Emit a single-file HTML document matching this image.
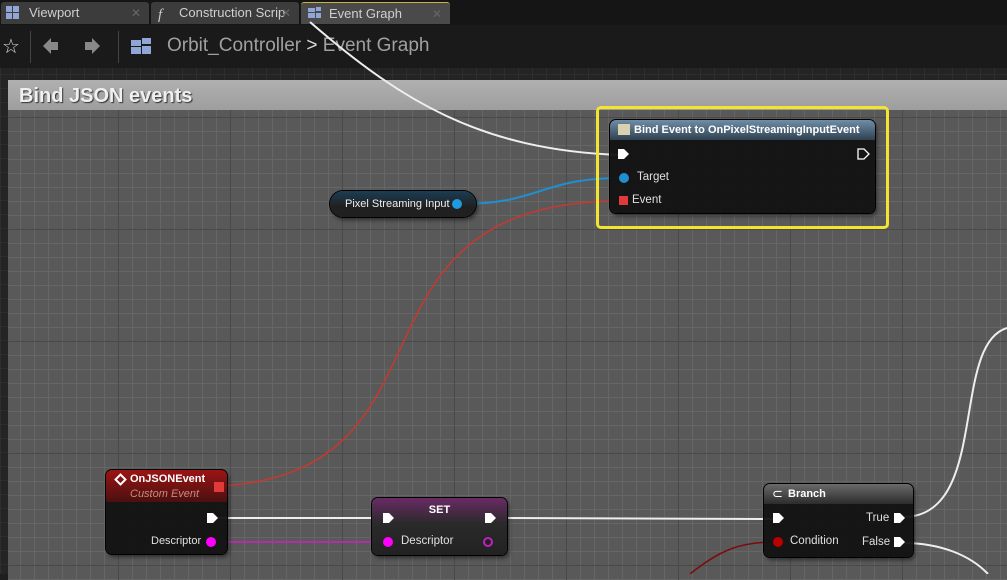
<!DOCTYPE html>
<html><head><meta charset="utf-8"><style>
*{margin:0;padding:0;box-sizing:border-box}
body{width:1007px;height:574px;overflow:hidden;background:#1e1e1e;font-family:"Liberation Sans",sans-serif;position:relative}
.tabs{position:absolute;left:0;top:0;width:1007px;height:25px;background:#151515}
.tab{position:absolute;top:2px;height:22px;background:#3c3c3c;color:#d0d0d0;font-size:13px;line-height:22px;padding-left:28px;border-radius:3px 3px 0 0}
.tab .x{position:absolute;right:8px;top:0;color:#666;font-size:12px}
.tool{position:absolute;left:0;top:25px;width:1007px;height:43px;background:#1a1a1a}
.graph{position:absolute;left:0;top:68px;width:1007px;height:506px;background:#242424;
background-image:linear-gradient(#2e2e2e 1px,transparent 1px),linear-gradient(90deg,#2e2e2e 1px,transparent 1px);background-size:14px 14px;background-position:0 6px}
.comment{position:absolute;left:8px;top:80px;width:1010px;height:500px;background:#595959;
background-image:linear-gradient(90deg,#4a4a4a 1px,transparent 1px),linear-gradient(#4a4a4a 1px,transparent 1px),linear-gradient(#666 1px,transparent 1px),linear-gradient(90deg,#666 1px,transparent 1px);
background-size:112px 112px,112px 112px,14px 14px,14px 14px;background-position:-2px 37px,-2px 37px,-2px 9px,-2px 9px}
.chead{position:absolute;left:8px;top:80px;width:1010px;height:30px;background:linear-gradient(#b0b0b0,#9e9e9e);color:#f0f0f0;font-weight:bold;font-size:20px;line-height:32px;padding-left:11px;text-shadow:1px 1px 1px #333}
.node{position:absolute;background:rgba(18,18,18,.95);border-radius:6px;box-shadow:0 0 0 1px #000,2px 3px 4px rgba(0,0,0,.5);color:#ddd;font-size:11px}
.nh{height:20px;border-radius:6px 6px 0 0;color:#fff;font-weight:bold;font-size:11px;line-height:20px;padding-left:24px}
.t{position:absolute;font-size:11.5px;color:#e0e0e0}
svg{position:absolute;left:0;top:0}
</style></head><body>
<div class="tabs">
<div class="tab" style="left:1px;width:148px">Viewport<span class="x">✕</span></div>
<div class="tab" style="left:151px;width:148px">Construction Scrip<span class="x">✕</span></div>
<div class="tab" style="left:301px;width:149px;background:#4a4a4a;border-top:1px solid #c9b545">Event Graph<span class="x">✕</span></div>
</div>
<div class="tool">
<div style="position:absolute;left:2px;top:9px;color:#ddd;font-size:20px">☆</div>
<div style="position:absolute;left:30px;top:6px;width:1px;height:32px;background:#444"></div>
<div style="position:absolute;left:118px;top:6px;width:1px;height:32px;background:#444"></div>
<div style="position:absolute;left:167px;top:10px;color:#a0a0a0;font-size:19px">Orbit_Controller <span style="color:#ddd">&gt;</span> Event Graph</div>
</div>
<div class="graph"></div>
<div class="comment"></div>
<div class="chead">Bind JSON events</div>
<svg width="1007" height="574">
<g fill="#8fa6d6"><rect x="6" y="6" width="6" height="6"/><rect x="13" y="6" width="6" height="6"/><rect x="6" y="13" width="6" height="6"/><rect x="13" y="13" width="6" height="6"/>
<rect x="308" y="8" width="7" height="4"/><rect x="316" y="7" width="5" height="4"/><rect x="308" y="13" width="7" height="5"/><rect x="316" y="13" width="5" height="5"/>
<rect x="131" y="40" width="10" height="6"/><rect x="142" y="38" width="9" height="6"/><rect x="131" y="47" width="10" height="7"/><rect x="142" y="46" width="9" height="8"/></g>
<text x="158" y="19" fill="#ccc" font-family="Liberation Serif" font-style="italic" font-size="15">f</text>
<path d="M43 46 L51 38 L51 42 L58 42 L58 50 L51 50 L51 54 Z" fill="#888"/>
<path d="M100 46 L92 38 L92 42 L85 42 L85 50 L92 50 L92 54 Z" fill="#888"/>
<g fill="none" stroke-width="2">
<path d="M310 22 C400 100 480 150 620 155" stroke="#eee"/>
<path d="M460 204 C540 204 540 178 622 178" stroke="#1f8fd0"/>
<path d="M222 486 C470 470 330 201 622 201" stroke="#c8382f" stroke-width="1.5"/>
<path d="M215 518 L385 518 M495 518 L775 519" stroke="#eee"/>
<path d="M215 542 L385 542" stroke="#b12ea8"/>
<path d="M903 517 C990 517 950 345 1007 328" stroke="#eee"/>
<path d="M903 543 C940 543 970 555 988 574" stroke="#eee"/>
<path d="M690 574 C720 550 740 542 775 542" stroke="#7a0c0c" stroke-width="1.5"/>
</g>
</svg>
<div style="position:absolute;left:596px;top:106px;width:293px;height:123px;border:3px solid #f2e42f;border-radius:5px"></div>
<div class="node" style="left:610px;top:120px;width:265px;height:93px">
<div class="nh" style="background:linear-gradient(#6f8ea8,#2f4150)">Bind Event to OnPixelStreamingInputEvent</div>
<div style="position:absolute;left:8px;top:4px;width:12px;height:11px;background:#d9d0b0"></div>
<svg style="left:8px;top:28px" width="260" height="60"><path d="M0 1 L6 1 L11 6 L6 11 L0 11Z" fill="#fff"/><path d="M240 1 L246 1 L251 6 L246 11 L240 11Z" fill="none" stroke="#fff" stroke-width="1.3"/><circle cx="6" cy="30" r="5" fill="#1f8fd0"/><rect x="1" y="48" width="9" height="9" fill="#e03a3a"/></svg>
<div class="t" style="left:27px;top:51px">Target</div><div class="t" style="left:22px;top:74px">Event</div>
</div>
<div class="node" style="left:330px;top:191px;width:146px;height:26px;border-radius:13px;background:linear-gradient(#1b3d55,#202020 60%)"><div class="t" style="left:15px;top:7px;color:#eee;font-size:11px">Pixel Streaming Input</div><div style="position:absolute;left:122px;top:8px;width:10px;height:10px;border-radius:5px;background:#1f9ae0"></div></div>
<div class="node" style="left:106px;top:470px;width:121px;height:84px">
<div class="nh" style="height:32px;background:linear-gradient(#9c1414,#4a1010);line-height:19px">OnJSONEvent</div>
<div style="position:absolute;left:24px;top:18px;color:#c98a80;font-style:italic;font-size:11px">Custom Event</div>
<div style="position:absolute;left:10px;top:5px;width:9px;height:9px;border:2px solid #fff;transform:rotate(45deg)"></div>
<div style="position:absolute;left:108px;top:12px;width:10px;height:10px;background:#e03a3a"></div>
<svg style="left:100px;top:42px" width="20" height="40"><path d="M1 1 L7 1 L12 6 L7 11 L1 11Z" fill="#fff"/><circle cx="5" cy="30" r="5" fill="#f0f"/></svg>
<div class="t" style="left:45px;top:65px;font-size:11px">Descriptor</div>
</div>
<div class="node" style="left:372px;top:498px;width:135px;height:57px;background:linear-gradient(#6a2a66,#2a2a2a 45%,#222)">
<div style="position:absolute;left:0;width:135px;top:6px;text-align:center;color:#fff;font-weight:bold;font-size:11px">SET</div>
<svg style="left:10px;top:14px" width="120" height="40"><path d="M1 1 L7 1 L12 6 L7 11 L1 11Z" fill="#fff"/><path d="M103 1 L109 1 L114 6 L109 11 L103 11Z" fill="#fff"/><circle cx="6" cy="30" r="5" fill="#f0f"/><circle cx="106" cy="30" r="4" fill="#222" stroke="#c020c0" stroke-width="2"/></svg>
<div class="t" style="left:29px;top:37px">Descriptor</div>
</div>
<div class="node" style="left:764px;top:484px;width:149px;height:73px">
<div class="nh" style="background:linear-gradient(#6a6a6a,#2c2c2c)">Branch</div>
<div style="position:absolute;left:8px;top:2px;color:#fff;font-size:13px">⊂</div>
<svg style="left:8px;top:28px" width="140" height="40"><path d="M1 1 L7 1 L12 6 L7 11 L1 11Z" fill="#fff"/><path d="M122 1 L128 1 L133 6 L128 11 L122 11Z" fill="#fff"/><circle cx="6" cy="30" r="5" fill="#b00"/><path d="M122 25 L128 25 L133 30 L128 35 L122 35Z" fill="#fff"/></svg>
<div class="t" style="left:26px;top:51px">Condition</div><div class="t" style="left:102px;top:28px">True</div><div class="t" style="left:98px;top:52px">False</div>
</div>
</body></html>
